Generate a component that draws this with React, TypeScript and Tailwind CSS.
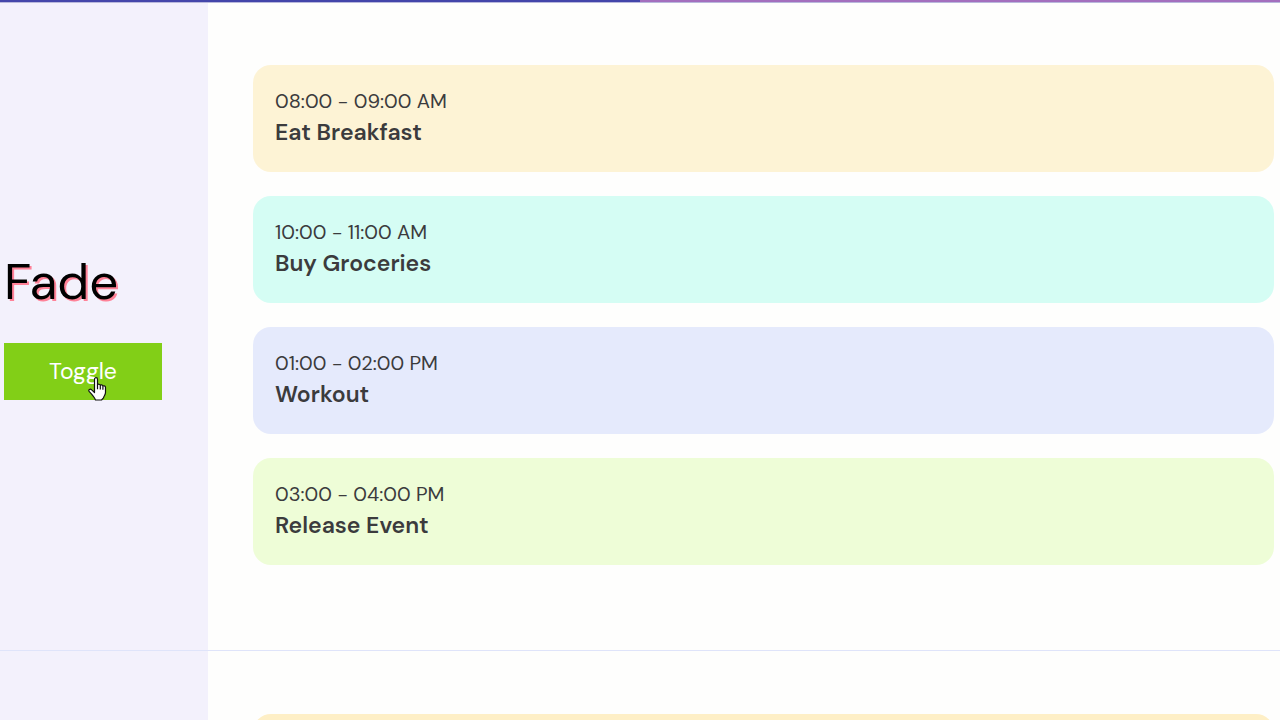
import React from "react";

type Item = { time: string; title: string; color: string };

const items: Item[] = [
  { time: "08:00 - 09:00 AM", title: "Eat Breakfast", color: "bg-[#fdf3d5]" },
  { time: "10:00 - 11:00 AM", title: "Buy Groceries", color: "bg-[#d5fdf4]" },
  { time: "01:00 - 02:00 PM", title: "Workout", color: "bg-[#e5eafc]" },
  { time: "03:00 - 04:00 PM", title: "Release Event", color: "bg-[#eefdd7]" },
];

function Card({ item }: { item: Item }) {
  return (
    <li className={`h-[107px] rounded-[18px] px-[22px] pt-[21px] text-[#3b3b3d] ${item.color}`}>
      <p className="text-[20px] leading-[30px]">{item.time}</p>
      <h2 className="text-[23px] font-semibold leading-[33px]">{item.title}</h2>
    </li>
  );
}

function HandCursor() {
  return (
    <svg
      aria-hidden="true"
      viewBox="0 0 20 25"
      className="pointer-events-none absolute left-[83px] top-[33px] h-[25px] w-5"
      fill="#fff"
      stroke="#111"
      strokeWidth="1.2"
      strokeLinejoin="round"
    >
      <path d="M7.5 14V3.3C7.5 1.1 10.5 1.1 10.5 3.3V9c.2-1.2 2.8-1 2.8.5.3-1.1 2.6-.8 2.6.8.5-.9 2.6-.4 2.6 1v5.2c0 2.4-1.6 3.5-2 5.4L14.5 24H8.5c-1-2.8-3-5-6.4-8.6-1.2-1.7 1.2-3 2.6-1.5l2.8 2.6z" />
      <path d="M10.5 9v4.3M13.3 9.7v3.8M15.9 10.6v3.1" fill="none" />
    </svg>
  );
}

export default function App() {
  return (
    <div className="flex h-screen flex-col overflow-hidden bg-[#fefefd] font-['DM_Sans',Inter,sans-serif]">
      <div className="flex h-[3px] shrink-0 border-b border-[#b9b8dc]">
        <div className="flex-1 bg-[#4446aa]" />
        <div className="flex-1 bg-[#a36fbe]" />
      </div>
      <section className="flex shrink-0 border-b border-[#dfe4fa]">
        <div className="flex w-[208px] shrink-0 flex-col items-start justify-center bg-[#f3f1fc] pb-0.5 pl-1">
          <h1 className="text-[51px] leading-[62px] text-black [text-shadow:2px_2px_0_#ff8298]">Fade</h1>
          <div className="relative mt-[30px]">
            <button type="button" className="h-[57px] w-[158px] cursor-pointer bg-[#82cf17] text-[23px] text-white">
              Toggle
            </button>
            <HandCursor />
          </div>
        </div>
        <ul className="flex flex-1 flex-col gap-6 pb-[85px] pl-[45px] pr-1.5 pt-[62px]">
          {items.map((item) => (
            <Card key={item.title} item={item} />
          ))}
        </ul>
      </section>
      <section className="flex min-h-0 flex-1">
        <div className="w-[208px] shrink-0 bg-[#f3f1fc]" />
        <div className="flex-1 pl-[45px] pr-1.5 pt-[63px]">
          <div className="h-[107px] rounded-[18px] bg-[#feefc6]" />
        </div>
      </section>
    </div>
  );
}
